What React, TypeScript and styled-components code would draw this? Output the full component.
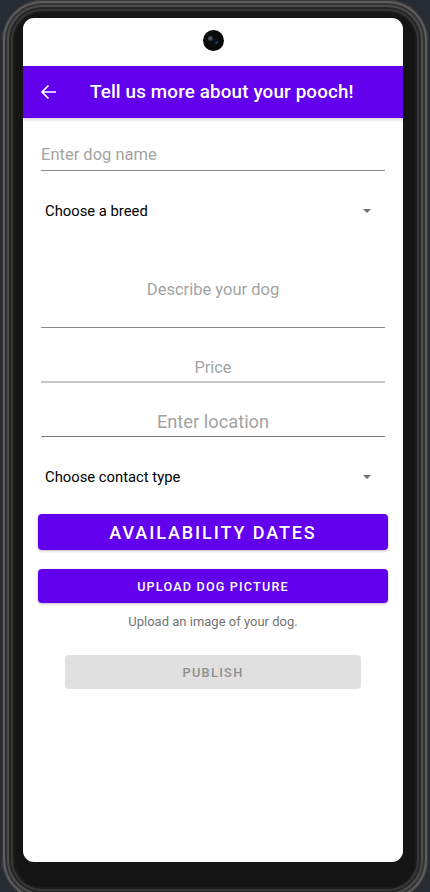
import React from "react";
import styled, { createGlobalStyle } from "styled-components";

const Global = createGlobalStyle`
  html, body { margin: 0; padding: 0; background: #272b33; }
  body { font-family: Roboto, "Noto Sans", sans-serif; }
  * { box-sizing: border-box; }
`;

const Page = styled.div`
  width: 430px;
  height: 892px;
  padding: 0 2px 0 2px;
  background: #272b33;
  overflow: hidden;
`;

const Phone = styled.div`
  height: 900px;
  border-radius: 40px;
  background: #141414;
  padding: 18px 25px 38px 21px;
  box-shadow:
    inset 0 0 0 1px #3a3a3a,
    inset 0 0 0 3px #5e5e5e,
    inset 0 0 0 5px #333,
    inset 0 0 0 7px #4c4c4c,
    inset 0 0 0 9px #262626,
    inset 0 0 0 11px #363636,
    inset 0 0 0 13px #1b1b1b;
`;

const Screen = styled.div`
  height: 844px;
  background: #ffffff;
  border-radius: 11px;
  overflow: hidden;
  display: flex;
  flex-direction: column;
`;

const StatusArea = styled.div`
  height: 48px;
  display: flex;
  justify-content: center;
  padding-top: 12px;
`;

const Camera = styled.div`
  width: 21px;
  height: 21px;
  border-radius: 50%;
  background: radial-gradient(circle at 35% 40%, #4a5568 0 1.5px, #0e0f12 3px, #050505 70%, #1a1a1a 100%);
  position: relative;
  &::after {
    content: "";
    position: absolute;
    left: 12px;
    top: 11px;
    width: 3px;
    height: 3px;
    border-radius: 50%;
    background: #1e3a6e;
  }
`;

const AppBar = styled.div`
  height: 52px;
  background: #6200ee;
  display: flex;
  align-items: center;
  padding-left: 17px;
  gap: 33px;
  box-shadow: 0 2px 3px rgba(0, 0, 0, 0.15);
  position: relative;
`;

const Title = styled.h1`
  margin: 0;
  color: #ffffff;
  font-size: 18.8px;
  font-weight: 500;
  letter-spacing: 0.15px;
`;

const Form = styled.div`
  display: flex;
  flex-direction: column;
  padding: 0 15px;
`;

const Field = styled.div<{ $h: number; $pb: number; $size: number; $center?: boolean; $line: string; $lw: number }>`
  height: ${(p) => p.$h}px;
  margin: 0 3px;
  display: flex;
  align-items: flex-end;
  justify-content: ${(p) => (p.$center ? "center" : "flex-start")};
  padding-bottom: ${(p) => p.$pb}px;
  border-bottom: ${(p) => p.$lw}px solid ${(p) => p.$line};
  color: #a3a3a3;
  font-size: ${(p) => p.$size}px;
  line-height: ${(p) => Math.round(p.$size * 1.18)}px;
`;

const Spinner = styled.div`
  height: 48px;
  margin: 16px 3px 0;
  padding: 0 14px 0 4px;
  display: flex;
  align-items: center;
  justify-content: space-between;
  color: #000;
  font-size: 14.8px;
`;

const Caret = styled.span`
  width: 0;
  height: 0;
  border-left: 4.5px solid transparent;
  border-right: 4.5px solid transparent;
  border-top: 4.5px solid #707070;
`;

const Button = styled.button<{ $mt: number; $h: number; $size: number; $ls: number; $wide?: boolean; $disabled?: boolean }>`
  margin-top: ${(p) => p.$mt}px;
  height: ${(p) => p.$h}px;
  width: ${(p) => (p.$wide ? "350px" : "296px")};
  align-self: center;
  border: none;
  border-radius: 4px;
  background: ${(p) => (p.$disabled ? "#e0e0e0" : "#6200ee")};
  color: ${(p) => (p.$disabled ? "#8f8f8f" : "#ffffff")};
  font-family: Roboto, sans-serif;
  font-size: ${(p) => p.$size}px;
  font-weight: 500;
  letter-spacing: ${(p) => p.$ls}px;
  text-transform: uppercase;
  padding: 0;
  box-shadow: ${(p) => (p.$disabled ? "none" : "0 1px 3px rgba(0,0,0,0.25)")};
`;

const Helper = styled.p`
  margin: 11px 0 0;
  text-align: center;
  color: #737373;
  font-size: 13px;
  line-height: 16px;
`;

const BackArrow = () => (
  <svg width="17" height="16" viewBox="0 0 17 16" fill="none">
    <path d="M16 8H2 M8.5 1.5L2 8l6.5 6.5" stroke="#fff" strokeWidth="1.7" />
  </svg>
);

export default function App() {
  return (
    <Page>
      <Global />
      <Phone>
        <Screen>
          <StatusArea>
            <Camera />
          </StatusArea>
          <AppBar>
            <BackArrow />
            <Title>Tell us more about your pooch!</Title>
          </AppBar>
          <Form>
            <Field $h={53} $pb={6} $size={16.5} $line="#8a8a8a" $lw={1}>Enter dog name</Field>
            <Spinner>
              <span>Choose a breed</span>
              <Caret />
            </Spinner>
            <Field $h={93} $pb={28} $size={16.5} $center $line="#8a8a8a" $lw={1}>Describe your dog</Field>
            <Field $h={55} $pb={4} $size={16.3} $center $line="#c6c6c6" $lw={2}>Price</Field>
            <Field $h={54} $pb={3} $size={18.3} $center $line="#7a7a7a" $lw={1}>Enter location</Field>
            <Spinner>
              <span>Choose contact type</span>
              <Caret />
            </Spinner>
            <Button $mt={13} $h={36} $size={18} $ls={1.9} $wide>Availability Dates</Button>
            <Button $mt={19} $h={34} $size={12.6} $ls={1.2} $wide>Upload dog picture</Button>
            <Helper>Upload an image of your dog.</Helper>
            <Button $mt={25} $h={34} $size={12.8} $ls={1.3} $disabled>Publish</Button>
          </Form>
        </Screen>
      </Phone>
    </Page>
  );
}
